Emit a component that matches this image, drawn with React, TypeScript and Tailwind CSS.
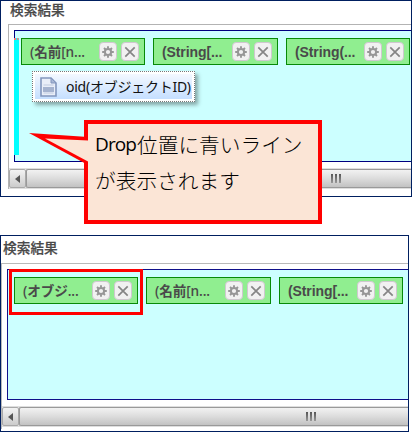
import React from "react";

const UI_FONT = "font-['Liberation_Sans','Noto_Sans_CJK_JP',sans-serif]";

function Gear() {
  return (
    <svg width="12" height="12" viewBox="0 0 12 12" fill="none" stroke="#969696">
      <circle cx="6" cy="6" r="3.1" strokeWidth="2" />
      <path
        d="M6 0.2V2.4M6 9.6v2.2M0.2 6h2.2M9.6 6h2.2M2 2l1.5 1.5M8.5 8.5L10 10M10 2L8.5 3.5M3.5 8.5L2 10"
        strokeWidth="1.9"
      />
    </svg>
  );
}

function Cross() {
  return (
    <svg width="12" height="12" viewBox="0 0 12 12" fill="none" stroke="#858585">
      <path d="M1.3 1.3l9.4 9.4M10.7 1.3L1.3 10.7" strokeWidth="1.7" />
    </svg>
  );
}

function IconButton({ children }: { children: React.ReactNode }) {
  return (
    <span className="flex h-[19px] w-[18px] shrink-0 items-center justify-center rounded-[4px] border border-[#cfc8cf] bg-[#f1f1f1]">
      {children}
    </span>
  );
}

type ChipProps = { label: string; width: string; text: string };

function Chip({ label, width, text }: ChipProps) {
  return (
    <div
      className={`flex h-[27px] shrink-0 items-center border border-[#078a07] bg-[#90ee90] pl-[8px] pr-[5px] ${width}`}
    >
      <span className={`w-0 flex-1 whitespace-nowrap leading-[20px] text-[#4a4a4a] ${text}`}>{label}</span>
      <div className="flex gap-[4px]">
        <IconButton>
          <Gear />
        </IconButton>
        <IconButton>
          <Cross />
        </IconButton>
      </div>
    </div>
  );
}

const LATIN = "text-[14px] font-bold tracking-[-0.1px]";
const KANJI = "pt-px text-[13.6px] font-semibold font-['Open_Sans','Noto_Sans_CJK_JP',sans-serif] tracking-[-0.1px]";

function ScrollBar({ grip }: { grip: string }) {
  return (
    <div className="flex h-[21px] border-y border-[#dedede] bg-[#e6e6e6]">
      <div className="flex h-[19px] w-[17px] shrink-0 items-center justify-center rounded-[2px] border border-[#a9a9a9] bg-linear-to-b from-[#f3f3f3] to-[#cccccc]">
        <svg width="5" height="8" viewBox="0 0 5 8">
          <path d="M5 0v8L0 4z" fill="#555" />
        </svg>
      </div>
      <div className="h-[19px] flex-1 rounded-l-[2px] border border-r-0 border-[#999] bg-linear-to-b from-[#f2f2f2] via-[#dcdcdc] to-[#c2c2c2]">
        <div className={`flex h-full items-center gap-[2px] ${grip}`}>
          <i className="h-[9px] w-[2px] bg-linear-to-b from-[#555] to-[#999]" />
          <i className="h-[9px] w-[2px] bg-linear-to-b from-[#555] to-[#999]" />
          <i className="h-[9px] w-[2px] bg-linear-to-b from-[#555] to-[#999]" />
        </div>
      </div>
    </div>
  );
}

function DragTip() {
  return (
    <div className="absolute left-[32px] top-[71px] flex h-[31px] w-[163px] items-center border border-dotted border-[#777] bg-white p-[2px] shadow-[3px_3px_4px_rgba(0,0,0,0.35)]">
      <div className="flex h-full w-full items-center bg-linear-to-b from-[#f3f8ff] to-[#c5dfff] pl-[5px]">
        <svg width="17" height="20" viewBox="0 0 17 20">
          <path d="M1 1h10l5 5v13H1z" fill="#e9eef8" stroke="#8296bd" strokeWidth="1.6" />
          <path d="M11 1v5h5z" fill="#a9b8d6" stroke="#8296bd" />
          <path d="M3.5 8h10M3.5 16h10" stroke="#c0cbe0" />
          <path d="M3 10h11v5H3z" fill="#a5b3cf" />
        </svg>
        <span className="ml-[9px] whitespace-nowrap font-['Noto_Sans','Noto_Sans_CJK_JP',sans-serif] text-[14px] leading-[20px] tracking-[-0.25px] text-[#111]">
          oid(オブジェクトID)
        </span>
      </div>
    </div>
  );
}

function Callout() {
  return (
    <>
      <div className="absolute left-[84px] top-[120px] h-[104px] w-[238px] border-4 border-[#ff0000] bg-[#fbe5d6] pl-[7px] pt-[2px] font-['Noto_Sans_CJK_JP',sans-serif] text-[20.7px] font-light leading-[36px] text-black">
        <p className="flex h-[36px] whitespace-nowrap">
          <span className="w-[42px] shrink-0 font-['Open_Sans',sans-serif] text-[19px] font-normal tracking-[-0.9px]">Drop</span>
          <span>位置に青いライン</span>
        </p>
        <p className="h-[36px] whitespace-nowrap">が表示されます</p>
      </div>
      <svg className="absolute left-[28px] top-[130px]" width="61" height="38" viewBox="0 0 61 38">
        <path d="M1 3l59 4v28z" fill="#ff0000" />
        <path d="M60 10.5L17 8.5L60 31.5z" fill="#fbe5d6" />
      </svg>
    </>
  );
}

export default function App() {
  return (
    <main className={`relative h-[432px] w-[412px] overflow-hidden bg-white ${UI_FONT}`}>
      <section className="flex h-[197px] w-[412px] flex-col overflow-hidden border border-[#001f60]">
        <h2 className="h-[23px] shrink-0 pl-[9px] text-[13.7px] font-medium leading-[19px] text-[#4a4a4a] [-webkit-text-stroke:0.2px_#4a4a4a]">検索結果</h2>
        <div className="ml-[7px] flex h-[165px] flex-col border-l border-t border-[#b3b3b3]">
          <div className="ml-[5px] mt-[5px] flex h-[132px] shrink-0 gap-[8px] overflow-hidden border border-r-0 border-[#000080] bg-[#ccffff] pl-[6px] pt-[7px]">
            <Chip label="(名前[n..." width="w-[124px]" text={KANJI} />
            <Chip label="(String[..." width="w-[125px]" text={LATIN} />
            <Chip label="(String(..." width="w-[124px]" text={LATIN} />
          </div>
          <div className="mt-[6px]">
            <ScrollBar grip="pl-[304px]" />
          </div>
        </div>
      </section>

      <section className="mt-[38px] flex h-[197px] w-[409px] flex-col overflow-hidden border border-[#001f60]">
        <h2 className="h-[27px] shrink-0 pl-[2px] text-[13.7px] font-medium leading-[26px] text-[#4a4a4a] [-webkit-text-stroke:0.2px_#4a4a4a]">検索結果</h2>
        <div className="flex h-[166px] flex-col border-l border-t border-[#b9b9b9]">
          <div className="ml-[5px] mt-[5px] flex h-[131px] shrink-0 gap-[8px] overflow-hidden border border-r-0 border-[#10108a] bg-[#ccffff] pl-[6px] pt-[7px]">
            <Chip label="(オブジ..." width="w-[124px]" text={KANJI} />
            <Chip label="(名前[n..." width="w-[125px]" text={KANJI} />
            <Chip label="(String[..." width="w-[124px]" text={LATIN} />
          </div>
          <div className="mt-[6px]">
            <ScrollBar grip="pl-[286px]" />
          </div>
        </div>
      </section>

      <div className="absolute left-[14px] top-[38px] h-[117px] w-[5px] border-t-2 border-dotted border-t-[#f08080] bg-[#00ffff]" />
      <DragTip />
      <Callout />
      <div className="absolute left-[9px] top-[269px] h-[46px] w-[134px] border-3 border-[#ff0000]" />
    </main>
  );
}
